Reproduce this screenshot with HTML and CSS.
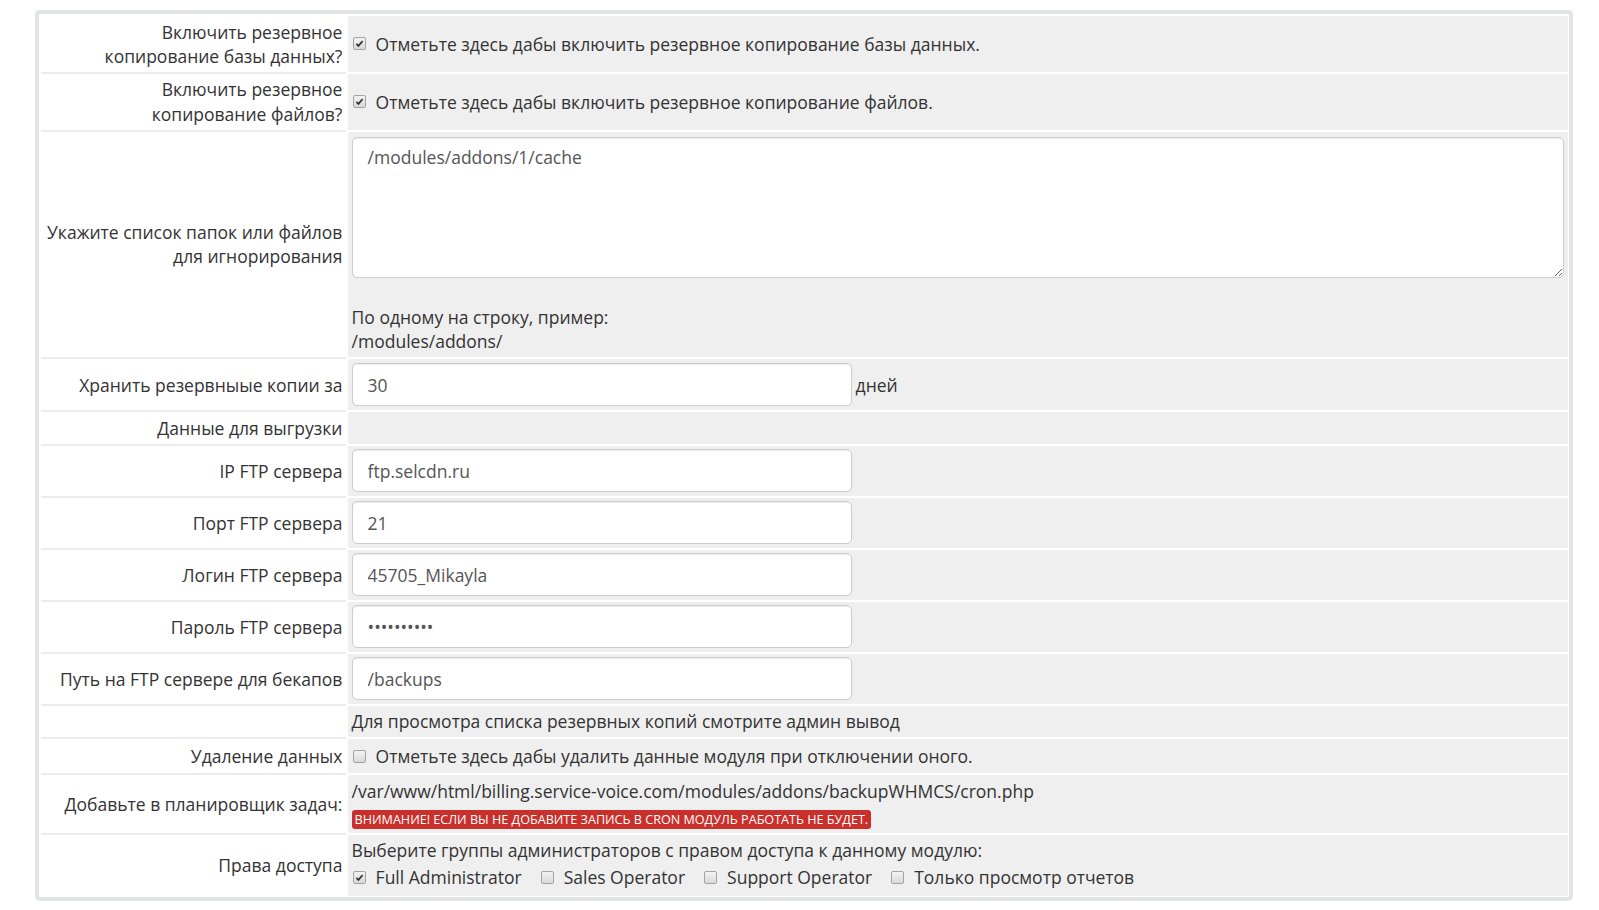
FILE: index.html
```html
<!DOCTYPE html>
<html lang="ru">
<head>
<meta charset="utf-8">
<title>Backup WHMCS</title>
<link rel="stylesheet" href="styles.css">
</head>
<body>
<div class="box">
  <table class="form">
    <colgroup><col class="col-label"><col></colgroup>
    <tr>
      <td class="fieldlabel">Включить резервное<br>копирование базы данных?</td>
      <td class="fieldarea"><div class="cbrow"><span class="cb checked"><svg viewBox="0 0 12 12"><path d="M2.6 6.3 L4.9 8.6 L9.4 3.2"/></svg></span>Отметьте здесь дабы включить резервное копирование базы данных.</div></td>
    </tr>
    <tr>
      <td class="fieldlabel">Включить резервное<br>копирование файлов?</td>
      <td class="fieldarea"><div class="cbrow"><span class="cb checked"><svg viewBox="0 0 12 12"><path d="M2.6 6.3 L4.9 8.6 L9.4 3.2"/></svg></span>Отметьте здесь дабы включить резервное копирование файлов.</div></td>
    </tr>
    <tr>
      <td class="fieldlabel">Укажите список папок или файлов<br>для игнорирования</td>
      <td class="fieldarea">
        <textarea class="textarea">/modules/addons/1/cache</textarea>
        <div class="help">По одному на строку, пример:<br>/modules/addons/</div>
      </td>
    </tr>
    <tr>
      <td class="fieldlabel">Хранить резервныые копии за</td>
      <td class="fieldarea"><div class="inline"><input class="input" type="text" value="30"><span>дней</span></div></td>
    </tr>
    <tr>
      <td class="fieldlabel">Данные для выгрузки</td>
      <td class="fieldarea"></td>
    </tr>
    <tr>
      <td class="fieldlabel">IP FTP сервера</td>
      <td class="fieldarea"><input class="input" type="text" value="ftp.selcdn.ru"></td>
    </tr>
    <tr>
      <td class="fieldlabel">Порт FTP сервера</td>
      <td class="fieldarea"><input class="input" type="text" value="21"></td>
    </tr>
    <tr>
      <td class="fieldlabel">Логин FTP сервера</td>
      <td class="fieldarea"><input class="input" type="text" value="45705_Mikayla"></td>
    </tr>
    <tr>
      <td class="fieldlabel">Пароль FTP сервера</td>
      <td class="fieldarea"><input class="input" type="password" value="abcdefghij"></td>
    </tr>
    <tr>
      <td class="fieldlabel">Путь на FTP сервере для бекапов</td>
      <td class="fieldarea"><input class="input" type="text" value="/backups"></td>
    </tr>
    <tr>
      <td class="fieldlabel"></td>
      <td class="fieldarea">Для просмотра списка резервных копий смотрите админ вывод</td>
    </tr>
    <tr>
      <td class="fieldlabel">Удаление данных</td>
      <td class="fieldarea"><div class="cbrow tall"><span class="cb"></span>Отметьте здесь дабы удалить данные модуля при отключении оного.</div></td>
    </tr>
    <tr>
      <td class="fieldlabel">Добавьте в планировщик задач:</td>
      <td class="fieldarea">
        <div>/var/www/html/billing.service-voice.com/modules/addons/backupWHMCS/cron.php</div>
        <div class="badgeline"><span class="badge">ВНИМАНИЕ! ЕСЛИ ВЫ НЕ ДОБАВИТЕ ЗАПИСЬ В CRON МОДУЛЬ РАБОТАТЬ НЕ БУДЕТ.</span></div>
      </td>
    </tr>
    <tr>
      <td class="fieldlabel">Права доступа</td>
      <td class="fieldarea">
        <div>Выберите группы администраторов с правом доступа к данному модулю:</div>
        <div class="cbrow groups">
          <label class="item"><span class="cb checked"><svg viewBox="0 0 12 12"><path d="M2.6 6.3 L4.9 8.6 L9.4 3.2"/></svg></span>Full Administrator</label>
          <label class="item"><span class="cb"></span>Sales Operator</label>
          <label class="item"><span class="cb"></span>Support Operator</label>
          <label class="item"><span class="cb"></span>Только просмотр отчетов</label>
        </div>
      </td>
    </tr>
  </table>
</div>
</body>
</html>
```
FILE: styles.css
```css
* { box-sizing: border-box; }

body {
  margin: 0;
  background: #fff;
  font-family: "Open Sans", "Liberation Sans", sans-serif;
  font-size: 17.5px;
  line-height: 24.3px;
  color: #333;
}

.box {
  margin: 10px 0 0 35px;
  width: 1538px;
  border: 4px solid #e0e4e4;
  border-radius: 5px;
  padding: 0 1px 1px 2px;
  background: #fff;
}

.form {
  width: 100%;
  table-layout: fixed;
  border-collapse: separate;
  border-spacing: 0;
}

.col-label { width: 305px; }

.form td {
  padding: 3.6px;
  border-top: 2px solid #fff;
  vertical-align: middle;
}

.form td.fieldlabel {
  text-align: right;
  white-space: nowrap;
  background: #fff;
  border-top-color: #ececec;
}

.form tr:first-child td.fieldlabel { border-top-color: #fff; }

.form td.fieldarea {
  background: #efefef;
  border-left: 2px solid #fff;
}

.cbrow {
  display: flex;
  align-items: center;
}

.cbrow.tall { min-height: 26.8px; }

.cb {
  flex: none;
  display: inline-block;
  width: 13px;
  height: 13px;
  margin: 0 10px 0 1px;
  border: 1px solid #a3a3a3;
  border-radius: 2px;
  background: linear-gradient(#f3f3f3, #d9d9d9);
}

.cb svg {
  display: block;
  width: 11px;
  height: 11px;
}

.cb path {
  fill: none;
  stroke: #333;
  stroke-width: 1.9;
}

.textarea {
  display: block;
  width: 100%;
  height: 141.7px;
  margin: 1.5px 0 0;
  padding: 7.8px 15px;
  border: 1px solid #ccc;
  border-radius: 5px;
  box-shadow: inset 0 1px 1px rgba(0,0,0,.075);
  font: inherit;
  color: #555;
  background: #fff;
  resize: vertical;
}

.help { margin-top: 26.8px; }

.inline {
  display: flex;
  align-items: center;
  gap: 4px;
  min-height: 43.8px;
}

.input {
  display: block;
  width: 500px;
  height: 42.8px;
  padding: 0 15px;
  border: 1px solid #ccc;
  border-radius: 5px;
  box-shadow: inset 0 1px 1px rgba(0,0,0,.075);
  font: inherit;
  color: #555;
  background: #fff;
}

.badgeline {
  height: 26px;
  padding-top: 7px;
}

.badge {
  display: inline-block;
  height: 19px;
  line-height: 19px;
  padding: 0 3px;
  font-size: 12.6px;
  color: #fff;
  background: #c9302c;
  border-radius: 3px;
  vertical-align: top;
}

.groups { min-height: 29.5px; }

.item {
  display: flex;
  align-items: center;
  margin-right: 18px;
}
```
